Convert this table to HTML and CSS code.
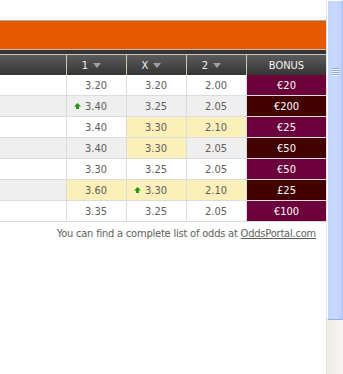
FILE: index.html
```html
<!DOCTYPE html>
<html>
<head>
<meta charset="utf-8">
<link rel="stylesheet" href="styles.css">
</head>
<body>
<div class="window">
  <div class="page">
    <div class="top-blank"></div>
    <div class="brand-bar"></div>
    <div class="dark-band"></div>
    <div class="odds">
      <div class="row head">
        <div class="cell name"></div>
        <div class="cell hd">1<span class="sort"></span></div>
        <div class="cell hd">X<span class="sort"></span></div>
        <div class="cell hd">2<span class="sort"></span></div>
        <div class="cell hd bonus-hd">BONUS</div>
      </div>
      <div class="row">
        <div class="cell name"></div>
        <div class="cell odd">3.20</div>
        <div class="cell odd">3.20</div>
        <div class="cell odd">2.00</div>
        <div class="cell bonus b1">€20</div>
      </div>
      <div class="row alt">
        <div class="cell name"></div>
        <div class="cell odd up"><svg class="arrow" width="7" height="6" viewBox="0 0 7 6"><polygon points="3.5,0 7,3.5 5,3.5 5,6 2,6 2,3.5 0,3.5" fill="#1f9a12"/></svg>3.40</div>
        <div class="cell odd">3.25</div>
        <div class="cell odd">2.05</div>
        <div class="cell bonus b2">€200</div>
      </div>
      <div class="row">
        <div class="cell name"></div>
        <div class="cell odd">3.40</div>
        <div class="cell odd hi">3.30</div>
        <div class="cell odd hi">2.10</div>
        <div class="cell bonus b1">€25</div>
      </div>
      <div class="row alt">
        <div class="cell name"></div>
        <div class="cell odd">3.40</div>
        <div class="cell odd hi">3.30</div>
        <div class="cell odd">2.05</div>
        <div class="cell bonus b2">€50</div>
      </div>
      <div class="row">
        <div class="cell name"></div>
        <div class="cell odd">3.30</div>
        <div class="cell odd">3.25</div>
        <div class="cell odd">2.05</div>
        <div class="cell bonus b1">€50</div>
      </div>
      <div class="row alt">
        <div class="cell name"></div>
        <div class="cell odd hi">3.60</div>
        <div class="cell odd hi up"><svg class="arrow" width="7" height="6" viewBox="0 0 7 6"><polygon points="3.5,0 7,3.5 5,3.5 5,6 2,6 2,3.5 0,3.5" fill="#1f9a12"/></svg>3.30</div>
        <div class="cell odd hi">2.10</div>
        <div class="cell bonus b2">£25</div>
      </div>
      <div class="row">
        <div class="cell name"></div>
        <div class="cell odd">3.35</div>
        <div class="cell odd">3.25</div>
        <div class="cell odd">2.05</div>
        <div class="cell bonus b1">€100</div>
      </div>
    </div>
    <p class="footer">You can find a complete list of odds at <a href="#">OddsPortal.com</a></p>
  </div>
  <div class="scrollbar">
    <div class="thumb"><div class="grip"><i></i><i></i><i></i><i></i></div></div>
    <div class="track"></div>
  </div>
</div>
</body>
</html>
```

FILE: styles.css
```css
html, body {
  margin: 0;
  padding: 0;
  background: #ffffff;
}
body {
  width: 343px;
  height: 374px;
  overflow: hidden;
  font-family: "DejaVu Sans Condensed", "DejaVu Sans", sans-serif;
  font-size: 11px;
}
.window {
  display: flex;
  height: 374px;
}
.page {
  width: 326px;
  flex: none;
  background: #ffffff;
}
.top-blank {
  height: 20px;
  border-bottom: 1px solid #aaa898;
}
.brand-bar {
  height: 28px;
  background: #e55a00;
  border-bottom: 1px solid #bdbcae;
}
.dark-band {
  height: 4px;
  background: #353535;
  border-bottom: 1px solid #c9c8b8;
}
.odds {
  display: flex;
  flex-direction: column;
}
.row {
  display: grid;
  grid-template-columns: 67px 60px 60px 60px 79px;
  height: 21px;
  border-bottom: 1px solid #dcdcdc;
  box-sizing: border-box;
  background: #ffffff;
}
.row.alt {
  background: #efefef;
}
.row.head {
  height: 20px;
  border-bottom: none;
  background: linear-gradient(#5b5b5b, #353535);
}
.cell {
  box-sizing: border-box;
  border-right: 1px solid #dcdcdc;
  display: flex;
  align-items: center;
  color: #5e5e5e;
}
.cell:last-child {
  border-right: none;
}
.head .cell {
  border-right-color: #c9c8b8;
  color: #f2f2f2;
  justify-content: center;
}
.hd {
  padding-right: 10px;
}
.bonus-hd {
  padding-right: 0;
}
.sort {
  display: inline-block;
  margin-left: 5px;
  width: 0;
  height: 0;
  border-left: 4px solid transparent;
  border-right: 4px solid transparent;
  border-top: 5px solid #a0a0a0;
}
.odd {
  justify-content: flex-end;
  padding-right: 19px;
}
.odd.up {
  justify-content: space-between;
  padding-left: 7px;
}
.arrow {
  display: block;
}
.hi {
  background: #fbf0b9;
}
.bonus {
  justify-content: center;
  color: #ffffff;
}
.b1 {
  background: #6b003a;
}
.b2 {
  background: #420000;
}
.footer {
  margin: 5px 10px 0 0;
  text-align: right;
  color: #5e5e5e;
  line-height: 14px;
  letter-spacing: -0.2px;
}
.footer a {
  color: #5e5e5e;
  text-decoration: underline;
}
.scrollbar {
  width: 17px;
  flex: none;
  display: flex;
  flex-direction: column;
  border-left: 1px solid #e6e5dc;
  box-sizing: border-box;
  background: #f3f1ec;
}
.thumb {
  height: 320px;
  box-sizing: border-box;
  border: 1px solid #ffffff;
  border-right-color: #a9c1f2;
  border-bottom: 1px solid #8fb0ea;
  background: linear-gradient(90deg, #c4d5fb, #c9d8fc 60%, #bccffa);
  display: flex;
  flex-direction: column;
  align-items: center;
  padding-top: 67px;
}
.grip {
  display: flex;
  flex-direction: column;
}
.grip i {
  display: block;
  width: 7px;
  height: 1px;
  background: #8cabef;
  border-bottom: 1px solid #eef3ff;
}
.track {
  flex: 1;
  background: linear-gradient(90deg, #eeede5, #f6f5f1);
}
```
